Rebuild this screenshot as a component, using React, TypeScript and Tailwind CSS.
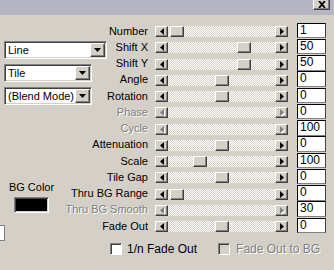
import React from "react";

type Row = { label: string; thumb: number | null; value: string; off?: boolean };

const rows: Row[] = [
  { label: "Number", thumb: 15, value: "1" },
  { label: "Shift X", thumb: 82, value: "50" },
  { label: "Shift Y", thumb: 82, value: "50" },
  { label: "Angle", thumb: 60, value: "0" },
  { label: "Rotation", thumb: 60, value: "0" },
  { label: "Phase", thumb: null, value: "0", off: true },
  { label: "Cycle", thumb: null, value: "100", off: true },
  { label: "Attenuation", thumb: 60, value: "0" },
  { label: "Scale", thumb: 38, value: "100" },
  { label: "Tile Gap", thumb: 60, value: "0" },
  { label: "Thru BG Range", thumb: 15, value: "0" },
  { label: "Thru BG Smooth", thumb: null, value: "30", off: true },
  { label: "Fade Out", thumb: 60, value: "0" },
];

const raised =
  "bg-[#d4d0c8] border border-t-white border-l-white border-r-[#404040] border-b-[#404040] shadow-[inset_-1px_-1px_0_#808080]";

const sunken =
  "border border-t-[#808080] border-l-[#808080] border-r-white border-b-white shadow-[inset_1px_1px_0_#404040,inset_-1px_-1px_0_#d4d0c8]";

// petite flèche des boutons de la barre de défilement
const Arrow = ({ dir, off }: { dir: "left" | "right"; off?: boolean }) => (
  <svg width="4" height="7" viewBox="0 0 4 7" className={off ? "drop-shadow-[1px_1px_0_#ffffff]" : ""}>
    <polygon
      points={dir === "left" ? "4,0 4,7 0,3.5" : "0,0 0,7 4,3.5"}
      fill={off ? "#808080" : "#000000"}
    />
  </svg>
);

const Slider = ({ thumb, off }: { thumb: number | null; off?: boolean }) => (
  <div className="relative flex justify-between w-[133px] h-[11px] bg-[image:repeating-conic-gradient(#d4d0c8_0_25%,#ffffff_0_50%)] bg-[length:2px_2px]">
    <div className={`${raised} w-[13px] h-[11px] flex items-center justify-center`}>
      <Arrow dir="left" off={off} />
    </div>
    {thumb !== null && (
      <div className={`${raised} absolute top-0 w-[14px] h-[11px]`} style={{ left: thumb }} />
    )}
    <div className={`${raised} w-[13px] h-[11px] flex items-center justify-center`}>
      <Arrow dir="right" off={off} />
    </div>
  </div>
);

const Dropdown = ({ text, width }: { text: string; width: string }) => (
  <div className={`${sunken} ${width} h-[18px] bg-white flex items-center justify-between pl-[3px] pr-[1px]`}>
    <span className="text-[11px] leading-none text-black">{text}</span>
    <div className={`${raised} w-[15px] h-[14px] flex items-center justify-center`}>
      <svg width="7" height="4" viewBox="0 0 7 4">
        <polygon points="0,0 7,0 3.5,4" fill="#000000" />
      </svg>
    </div>
  </div>
);

export default function App() {
  return (
    <div className="w-[334px] h-[270px] overflow-hidden bg-[#d4d0c8] text-[11px] text-black font-['Liberation_Sans',Arial,sans-serif]">
      {/* barre du haut */}
      <div className="h-[15px] bg-[#b5b5c5] flex justify-end items-start pr-[4px]">
        <div className="w-[17px] h-[10px] bg-[#d4d0c8] border-l border-l-white border-r border-r-[#404040] border-b border-b-[#404040] shadow-[inset_-1px_-1px_0_#808080] flex items-center justify-center">
          <svg width="8" height="7" viewBox="0 0 8 7">
            <path d="M1 0 L7 7 M7 0 L1 7" stroke="#000000" strokeWidth="1.8" />
          </svg>
        </div>
      </div>

      <div className="grid">
        {/* colonne de gauche */}
        <div className="col-start-1 row-start-1 flex flex-col pl-[4px] pt-[26px]">
          <Dropdown text="Line" width="w-[103px]" />
          <div className="h-[5px]" />
          <Dropdown text="Tile" width="w-[88px]" />
          <div className="h-[5px]" />
          <Dropdown text="(Blend Mode)" width="w-[88px]" />
          <div className="w-[55px] flex flex-col items-center mt-[76px]">
            <span className="leading-[13px]">BG Color</span>
            <div className={`${sunken} mt-[3px] w-[35px] h-[16px] bg-black`} />
          </div>
          <div className="ml-[-4px] mt-[12px] w-[5px] h-[16px] bg-white border-t border-r border-b border-[#808080]" />
        </div>

        {/* curseurs */}
        <div className="col-start-1 row-start-1 flex flex-col pt-[7.5px]">
          {rows.map((r) => (
            <div key={r.label} className="flex items-start h-[16.25px]">
              <span
                className={`w-[148px] text-right leading-[16px] whitespace-nowrap ${
                  r.off ? "text-[#808080] [text-shadow:1px_1px_0_#ffffff]" : ""
                }`}
              >
                {r.label}
              </span>
              <div className="ml-[7px] mt-[3.5px]">
                <Slider thumb={r.thumb} off={r.off} />
              </div>
              <div className="ml-[9px] w-[29px] h-[15.5px] bg-white border border-t-black border-l-black border-r-[#404040] border-b-[#808080] pl-[2px] text-[12px] leading-[13px]">
                {r.value}
              </div>
            </div>
          ))}

          <div className="flex items-center mt-[9px] h-[12px]">
            <div className="ml-[110px] w-[12px] h-[12px] bg-white border border-t-[#808080] border-l-[#808080] border-r-white border-b-white shadow-[inset_1px_1px_0_#404040]" />
            <span className="ml-[5px] text-[12px]">1/n Fade Out</span>
            <div className="ml-[21px] w-[12px] h-[12px] bg-[#d4d0c8] border border-t-[#808080] border-l-[#808080] border-r-white border-b-white shadow-[inset_1px_1px_0_#404040]" />
            <span className="ml-[6px] text-[12px] text-[#808080] [text-shadow:1px_1px_0_#ffffff]">Fade Out to BG</span>
          </div>
        </div>
      </div>
    </div>
  );
}
